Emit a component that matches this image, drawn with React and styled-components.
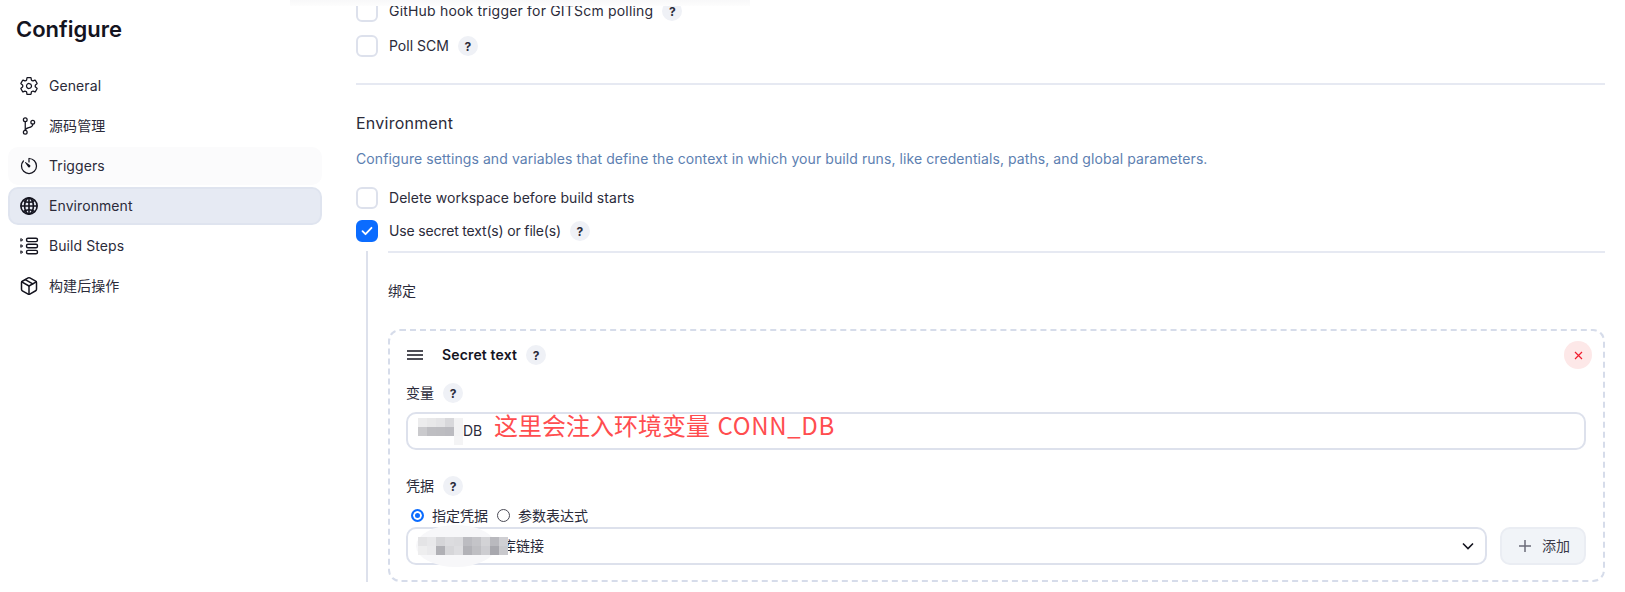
import React from 'react'
import styled, {createGlobalStyle} from 'styled-components'
import {IoSettingsOutline, IoGitBranchOutline, IoTimerOutline, IoGlobeOutline} from 'react-icons/io5'
import {Package} from 'lucide-react'

const FONT = `Inter, "Noto Sans CJK SC", sans-serif`

const Global = createGlobalStyle`
    html, body { margin: 0; padding: 0; background: #fff; }
    body { font-family: ${FONT}; color: #14141f; }
`

const Page = styled.div`
    position: relative;
    display: flex;
    width: 1625px;
    height: 592px;
    overflow: hidden;
    background: #fff;
`

const TopFade = styled.div`
    position: absolute;
    top: 0;
    left: 290px;
    width: 460px;
    height: 6px;
    background: linear-gradient(#f8f8f9, #fdfdfd);
`

const Sidebar = styled.aside`
    flex: 0 0 356px;
    padding: 0 34px 0 8px;
    box-sizing: border-box;
`

const Title = styled.h1`
    margin: 0 0 9px 8px;
    height: 58px;
    line-height: 58px;
    font-size: 22px;
    font-weight: 600;
    color: #14141f;
`

const Nav = styled.nav`
    display: flex;
    flex-direction: column;
    gap: 2px;
`

const NavItem = styled.div`
    display: flex;
    align-items: center;
    gap: 10px;
    height: 38px;
    padding: 0 9px;
    box-sizing: border-box;
    border-radius: 10px;
    font-size: 14px;
    letter-spacing: 0.08px;
    color: #2b2b3a;
    background: ${p => p.$active ? '#e6eaf3' : p.$hover ? '#fbfbfc' : 'transparent'};
    border: 2px solid ${p => p.$active ? '#dfe4ef' : p.$hover ? '#fbfbfc' : 'transparent'};
    svg { flex: none; width: 20px; height: 20px; color: #14141f; }
`

// sits the text a pixel above the centre of its row, as in the screenshot
const Label = styled.span`
    margin-bottom: 2px;
`

const HeavyGlobe = styled(IoGlobeOutline)`
    path, ellipse, circle, line { stroke-width: 42; }
`

const Main = styled.main`
    flex: 1;
    padding-right: 20px;
    min-width: 0;
`

const CheckRow = styled.div`
    display: flex;
    align-items: center;
    height: 22px;
    margin-bottom: ${p => p.$mb || 0}px;
    font-size: 14px;
    letter-spacing: ${p => p.$ls || 0}px;
    color: #2b2b3a;
`

const Box = styled.span`
    flex: none;
    display: flex;
    align-items: center;
    justify-content: center;
    width: 22px;
    height: 22px;
    box-sizing: border-box;
    margin-right: 11px;
    border-radius: 6px;
    border: 2px solid ${p => p.$checked ? '#0b6cff' : '#dde1ec'};
    background: ${p => p.$checked ? '#0b6cff' : '#fff'};
`

const Help = styled.span`
    display: inline-flex;
    align-items: center;
    justify-content: center;
    flex: none;
    width: 20px;
    height: 20px;
    margin-left: 9px;
    border-radius: 50%;
    background: #eff1f6;
    font-size: 12px;
    font-weight: 700;
    letter-spacing: 0;
    color: #2b2b3a;
`

const Divider = styled.div`
    height: 2px;
    background: #e6e9f2;
`

const SectionTitle = styled.h2`
    margin: 27px 0 0;
    height: 22px;
    line-height: 22px;
    font-size: 16px;
    font-weight: 400;
    letter-spacing: 0.25px;
    color: #2b2b3a;
`

const Description = styled.p`
    margin: 14px 0 17px;
    height: 22px;
    line-height: 22px;
    font-size: 14px;
    letter-spacing: 0.08px;
    color: #5d80b1;
`

const Nested = styled.div`
    margin-top: 9px;
    margin-left: 10px;
    padding-left: 20px;
    border-left: 2px solid #dde1ec;
`

const GroupLabel = styled.div`
    height: 76px;
    line-height: 76px;
    font-size: 14px;
    color: #2b2b3a;
`

const Card = styled.div`
    position: relative;
    box-sizing: border-box;
    height: 253px;
    padding: 10px 17px 0 16px;
    border: 2px dashed #d6dcea;
    border-radius: 12px;
`

const CardHead = styled.div`
    display: flex;
    align-items: center;
    height: 28px;
    font-size: 14px;
    font-weight: 600;
    letter-spacing: 0.15px;
    svg { margin: 0 19px 0 1px; }
`

const CloseButton = styled.span`
    position: absolute;
    top: 10px;
    right: 11px;
    display: flex;
    align-items: center;
    justify-content: center;
    width: 28px;
    height: 28px;
    border-radius: 50%;
    background: #fde8e8;
`

const FieldLabel = styled.div`
    display: flex;
    align-items: center;
    height: 20px;
    font-size: 14px;
    color: #2b2b3a;
    margin-top: ${p => p.$mt}px;
`

const Input = styled.div`
    position: relative;
    display: flex;
    align-items: center;
    box-sizing: border-box;
    height: 38px;
    margin-top: 9px;
    padding-left: 10px;
    border: 2px solid #dde1ec;
    border-radius: 10px;
    font-size: 14px;
    color: #2b2b3a;
`

const Note = styled.span`
    position: absolute;
    left: 86px;
    top: -7px;
    font-family: "Noto Sans CJK SC", sans-serif;
    font-size: 24px;
    line-height: 36px;
    word-spacing: 2px;
    color: #ff4d4f;
    white-space: nowrap;
`

const NoteLatin = styled.span`
    letter-spacing: 0.7px;
`

const RadioRow = styled.div`
    display: flex;
    align-items: center;
    height: 18px;
    margin-top: 10px;
    padding-left: 5px;
    font-size: 14px;
    color: #2b2b3a;
`

const Radio = styled.span`
    flex: none;
    box-sizing: border-box;
    width: 13px;
    height: 13px;
    margin-right: 8px;
    border-radius: 50%;
    border: ${p => p.$on ? '2px solid #0b6cff' : '1px solid #4a4a55'};
    background: ${p => p.$on ? '#0b6cff' : '#fff'};
    box-shadow: ${p => p.$on ? 'inset 0 0 0 2px #fff' : 'none'};
    margin-left: ${p => p.$ml || 0}px;
`

const SelectRow = styled.div`
    display: flex;
    gap: 13px;
    margin-top: 3px;
`

const Select = styled(Input)`
    flex: 1;
    margin-top: 0;
    justify-content: space-between;
    padding-right: 11px;
`

const AddButton = styled.div`
    flex: none;
    display: flex;
    align-items: center;
    gap: 11px;
    box-sizing: border-box;
    width: 86px;
    height: 38px;
    padding-left: 17px;
    border: 2px solid #eaedf3;
    border-radius: 10px;
    background: #f1f4f8;
    font-size: 14px;
    color: #3a3a48;
`

const Blur = styled.svg`
    flex: none;
    display: block;
    position: relative;
    z-index: 1;
    overflow: visible;
`

const Pieces = styled.span`
    display: flex;
    align-items: center;
`

const CoveredText = styled(Label)`
    margin-left: -6px;
`

// pixelated patches that cover the masked values
function Mosaic({cells, width, height, size, children}) {
    return (
        <Blur width={width} height={height} viewBox={`0 0 ${width} ${height}`}>
            {children}
            {cells.map((c, i) => <rect key={i} x={c[0] * size} y={c[1] * size} width={size} height={size} fill={c[2]} />)}
        </Blur>
    )
}

const nameCells = [
    [0, 0, '#ececed'], [1, 0, '#e8e8e9'], [2, 0, '#e4e4e6'], [3, 0, '#d8d8db'], [4, 0, '#f2f2f3'],
    [0, 1, '#cacacd'], [1, 1, '#bebec2'], [2, 1, '#bdbdc1'], [3, 1, '#bbbbc0'], [4, 1, '#f2f2f3'],
    [4, 2, '#f4f4f5'],
]

const credCells = [
    [0, 0, '#e4e4e6'], [1, 0, '#e8e8ea'], [2, 0, '#d5d5d8'], [3, 0, '#dcdcdf'], [4, 0, '#dadadd'], [5, 0, '#bcbcc1'], [6, 0, '#c4c4c8'], [7, 0, '#d3d3d6'], [8, 0, '#b9b9be'], [9, 0, '#cfcfd3'],
    [0, 1, '#eeeeef'], [1, 1, '#eaeaec'], [2, 1, '#b0b0b5'], [3, 1, '#d6d6d9'], [4, 1, '#dddde0'], [5, 1, '#b2b2b7'], [6, 1, '#bfbfc3'], [7, 1, '#cdcdd1'], [8, 1, '#a8a8ae'], [9, 1, '#c9c9cd'],
]

function BuildStepsIcon() {
    return (
        <svg viewBox="0 0 20 20" fill="none" stroke="currentColor" strokeWidth="1.4" strokeLinejoin="round">
            <rect x="7.5" y="2.2" width="11" height="3.4" rx="1.5" />
            <rect x="7.5" y="8.3" width="11" height="3.4" rx="1.5" />
            <rect x="7.5" y="14.4" width="11" height="3.4" rx="1.5" />
            <path d="M1.8 2.6l2 1.3-2 1.3zM1.8 8.7l2 1.3-2 1.3zM1.8 14.8l2 1.3-2 1.3z" strokeWidth="1" />
        </svg>
    )
}

export default function App() {
    return (
        <Page>
            <Global />
            <Sidebar>
                <Title>Configure</Title>
                <Nav>
                    <NavItem><IoSettingsOutline /><Label>General</Label></NavItem>
                    <NavItem><IoGitBranchOutline /><Label>源码管理</Label></NavItem>
                    <NavItem $hover><IoTimerOutline /><Label>Triggers</Label></NavItem>
                    <NavItem $active><HeavyGlobe /><Label>Environment</Label></NavItem>
                    <NavItem><BuildStepsIcon /><Label>Build Steps</Label></NavItem>
                    <NavItem><Package strokeWidth={1.8} /><Label>构建后操作</Label></NavItem>
                </Nav>
            </Sidebar>
            <Main>
                <CheckRow $mb={13} $ls={0.19}><Box /><Label>GitHub hook trigger for GITScm polling</Label><Help>?</Help></CheckRow>
                <CheckRow $mb={26}><Box /><Label>Poll SCM</Label><Help>?</Help></CheckRow>
                <Divider />
                <SectionTitle>Environment</SectionTitle>
                <Description>Configure settings and variables that define the context in which your build runs, like credentials, paths, and global parameters.</Description>
                <CheckRow $mb={11} $ls={0.05}><Box /><Label>Delete workspace before build starts</Label></CheckRow>
                <CheckRow $ls={-0.17}>
                    <Box $checked>
                        <svg width="12" height="10" viewBox="0 0 12 10" fill="none" stroke="#fff" strokeWidth="1.8" strokeLinecap="round" strokeLinejoin="round"><path d="M1.5 5.2l3 3 6-6.4" /></svg>
                    </Box>
                    <Label>Use secret text(s) or file(s)</Label><Help>?</Help>
                </CheckRow>
                <Nested>
                    <Divider />
                    <GroupLabel>绑定</GroupLabel>
                    <Card>
                        <CardHead>
                            <svg width="16" height="10" viewBox="0 0 16 10" stroke="#14141f" strokeWidth="1.4"><path d="M0 1h16M0 5h16M0 9h16" /></svg>
                            <Label>Secret text</Label><Help>?</Help>
                        </CardHead>
                        <CloseButton>
                            <svg width="9" height="9" viewBox="0 0 9 9" stroke="#f01c2e" strokeWidth="1.2"><path d="M1 1l7 7M8 1l-7 7" /></svg>
                        </CloseButton>
                        <FieldLabel $mt={14}><Label>变量</Label><Help>?</Help></FieldLabel>
                        <Input>
                            <Mosaic cells={nameCells} width={45} height={27} size={9} />
                            <Label>DB</Label>
                            <Note>这里会注入环境变量 <NoteLatin>CONN_DB</NoteLatin></Note>
                        </Input>
                        <FieldLabel $mt={26}><Label>凭据</Label><Help>?</Help></FieldLabel>
                        <RadioRow>
                            <Radio $on />指定凭据
                            <Radio $ml={9} />参数表达式
                        </RadioRow>
                        <SelectRow>
                            <Select>
                                <Pieces>
                                    <Mosaic cells={credCells} width={90} height={18} size={9}>
                                        <ellipse cx="38" cy="9" rx="40" ry="21" fill="#f7f7f9" />
                                    </Mosaic>
                                    <CoveredText>库链接</CoveredText>
                                </Pieces>
                                <svg width="12" height="8" viewBox="0 0 12 8" fill="none" stroke="#14141f" strokeWidth="1.6"><path d="M1 1.5l5 5 5-5" /></svg>
                            </Select>
                            <AddButton>
                                <svg width="12" height="12" viewBox="0 0 12 12" stroke="#6b6b78" strokeWidth="1.5"><path d="M6 0v12M0 6h12" /></svg>
                                <Label>添加</Label>
                            </AddButton>
                        </SelectRow>
                    </Card>
                </Nested>
            </Main>
            <TopFade />
        </Page>
    )
}
